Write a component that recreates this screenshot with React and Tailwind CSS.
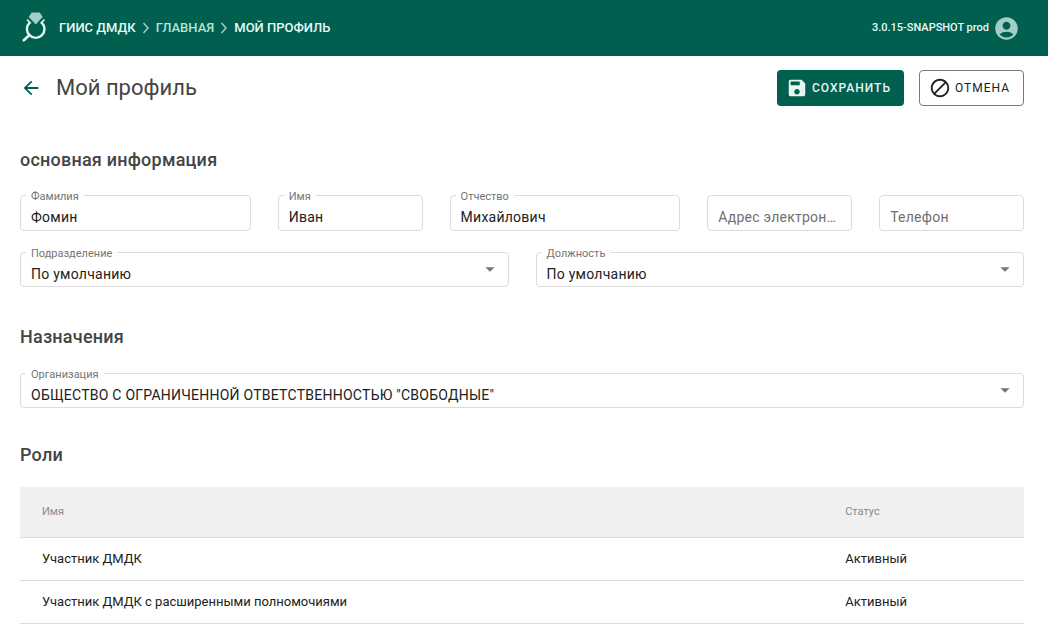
import { useState } from "react";
import {
  MdAccountCircle,
  MdArrowBack,
  MdArrowDropDown,
  MdDoNotDisturbAlt,
  MdSave,
} from "react-icons/md";

const roles = [
  { name: "Участник ДМДК", status: "Активный" },
  { name: "Участник ДМДК с расширенными полномочиями", status: "Активный" },
];

const Logo = () => (
  <svg className="w-7 h-8" viewBox="0 0 28 32" fill="none">
    <path
      d="M7.700 10.600A8.800 8.800 0 1 0 19.700 10.600"
      stroke="#dff7f1"
      strokeWidth="2.400"
    />
    <path
      d="M5 7.500L8.800 11.500M22.400 7.500L18.600 11.500"
      stroke="#dff7f1"
      strokeWidth="1.800"
    />
    <path
      d="M7.500 23L1.800 28.300"
      stroke="#dff7f1"
      strokeWidth="2.600"
      strokeLinecap="round"
    />
    <path d="M9.700 .5h8l3 4.500-7 7.500-7-7.500z" fill="#a3cec5" />
  </svg>
);

const Chevron = () => (
  <svg className="w-2 h-3" viewBox="0 0 8 12" fill="none">
    <path d="M1.500 1l4.500 5-4.500 5" stroke="#a3cec5" strokeWidth="1.500" />
  </svg>
);

const FieldLabel = ({ id, children }) => (
  <label
    htmlFor={id}
    className="absolute left-1.5 -top-[5px] bg-white px-[5px] text-[11px] leading-[14px] text-[#757575]"
  >
    {children}
  </label>
);

const TextField = ({ id, label, value, className }) => {
  const [text, setText] = useState(value || "");
  return (
    <div className={`relative ${className}`}>
      {text && <FieldLabel id={id}>{label}</FieldLabel>}
      <input
        id={id}
        type="text"
        aria-label={label}
        placeholder={label}
        value={text}
        onChange={(e) => setText(e.target.value)}
        className="w-full h-9 rounded border border-[#dcdcdc] px-2.5 pt-2 text-sm tracking-[0.25px] text-ellipsis text-[#212121] placeholder:text-[#6f6f6f]"
      />
    </div>
  );
};

const SelectField = ({ id, label, options, className }) => (
  <div className={`relative ${className}`}>
    <FieldLabel id={id}>{label}</FieldLabel>
    <select
      id={id}
      className="block w-full h-[35px] appearance-none rounded border border-[#dcdcdc] bg-white pl-2.5 pr-9 pt-2 text-sm tracking-[0.25px] text-[#212121]"
    >
      {options.map((option) => (
        <option key={option}>{option}</option>
      ))}
    </select>
    <MdArrowDropDown className="pointer-events-none absolute right-2 top-1.5 size-[22px] text-[#757575]" />
  </div>
);

const SectionTitle = ({ children }) => (
  <h2 className="text-lg leading-6 font-medium tracking-[0.0125em] text-[#444]">
    {children}
  </h2>
);

const App = () => {
  return (
    <div className="min-h-screen bg-white font-['Roboto',sans-serif] text-[#212121]">
      <header className="flex h-14 items-center justify-between bg-[#005f4f] pl-[22px] pr-7 text-[#e6fbf6]">
        <div className="flex items-center gap-[9px]">
          <Logo />
          <nav className="flex items-center gap-1.5 text-[13px] leading-4 font-medium">
            <a href="#">ГИИС ДМДК</a>
            <Chevron />
            <a href="#" className="text-[#b5e3d8]">
              ГЛАВНАЯ
            </a>
            <Chevron />
            <span>МОЙ ПРОФИЛЬ</span>
          </nav>
        </div>
        <div className="flex items-center gap-1">
          <span className="text-[11px] leading-4 font-medium">
            3.0.15-SNAPSHOT prod
          </span>
          <button type="button" aria-label="Профиль">
            <MdAccountCircle className="size-[27px] text-[#a3cec5]" />
          </button>
        </div>
      </header>

      <main className="pl-5 pr-6">
        <div className="flex items-center justify-between pt-3.5">
          <div className="flex items-center gap-3.5">
            <a href="#" aria-label="Назад">
              <MdArrowBack className="size-[22px] text-[#005f4f]" />
            </a>
            <h1 className="text-[22px] leading-7 text-[#444]">Мой профиль</h1>
          </div>
          <div className="flex gap-[15px]">
            <button
              type="button"
              className="flex h-9 items-center gap-1 rounded bg-[#005f4f] pl-[9px] pr-[13px] text-xs font-medium tracking-[1px] text-[#e6f5f2]"
            >
              <MdSave className="size-[22px]" />
              СОХРАНИТЬ
            </button>
            <button
              type="button"
              className="flex h-9 items-center gap-1 rounded border border-[#7a7a7a] pl-[9px] pr-[13px] text-xs tracking-[1px]"
            >
              <MdDoNotDisturbAlt className="size-[22px]" />
              ОТМЕНА
            </button>
          </div>
        </div>

        <form>
          <section className="pt-[42px]">
            <SectionTitle>основная информация</SectionTitle>
            <div className="grid grid-cols-12 gap-x-[27px] gap-y-[21px] pt-[23px]">
              <TextField
                id="surname"
                label="Фамилия"
                value="Фомин"
                className="col-span-3"
              />
              <TextField
                id="name"
                label="Имя"
                value="Иван"
                className="col-span-2"
              />
              <TextField
                id="patronymic"
                label="Отчество"
                value="Михайлович"
                className="col-span-3"
              />
              <TextField
                id="email"
                label="Адрес электронной почты"
                className="col-span-2"
              />
              <TextField id="phone" label="Телефон" className="col-span-2" />
              <SelectField
                id="department"
                label="Подразделение"
                options={["По умолчанию"]}
                className="col-span-6"
              />
              <SelectField
                id="position"
                label="Должность"
                options={["По умолчанию"]}
                className="col-span-6"
              />
            </div>
          </section>

          <section className="pt-[38px]">
            <SectionTitle>Назначения</SectionTitle>
            <SelectField
              id="organization"
              label="Организация"
              options={['ОБЩЕСТВО С ОГРАНИЧЕННОЙ ОТВЕТСТВЕННОСТЬЮ "СВОБОДНЫЕ"']}
              className="mt-6"
            />
          </section>
        </form>

        <section className="pt-[35px]">
          <SectionTitle>Роли</SectionTitle>
          <table className="mt-5 w-full table-fixed border-collapse text-left">
            <thead>
              <tr className="h-[50px] border-b border-[#dcdcdc] bg-[#f0f0f0] text-[11px] text-[#8a8a8a]">
                <th className="w-4/5 px-[22px] font-normal">Имя</th>
                <th className="px-[22px] font-normal">Статус</th>
              </tr>
            </thead>
            <tbody>
              {roles.map((role) => (
                <tr
                  key={role.name}
                  className="h-[43px] border-b border-[#dcdcdc] text-[13px]"
                >
                  <td className="px-[22px]">{role.name}</td>
                  <td className="px-[22px]">{role.status}</td>
                </tr>
              ))}
            </tbody>
          </table>
        </section>
      </main>
    </div>
  );
};

export default App;
